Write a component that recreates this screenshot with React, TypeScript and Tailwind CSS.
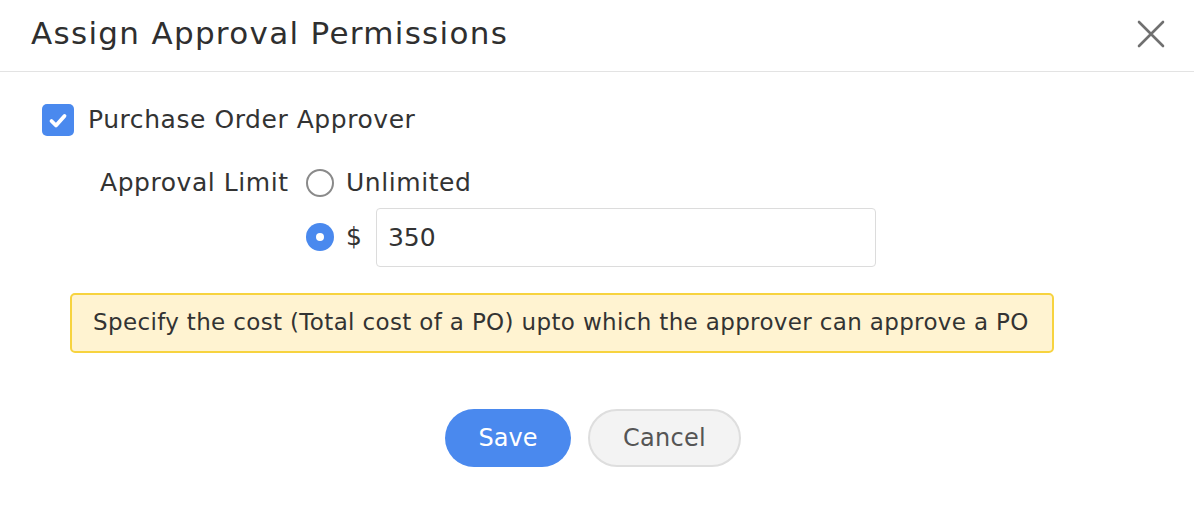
import React, { useState } from "react";

const App = () => {
  const [checked, setChecked] = useState(true);
  const [limit, setLimit] = useState("amount");
  const [amount, setAmount] = useState("350");

  return (
    <div
      className="w-[1194px] h-[512px] bg-white text-[#333333] overflow-hidden"
      style={{ fontFamily: "'DejaVu Sans', Inter, sans-serif" }}
    >
      <div className="h-[72px] flex items-center justify-between pl-[31px] pr-[28px] border-b border-[#e3e3e3]">
        <h1 className="text-[31px] font-normal tracking-[1.3px] text-[#2f2f2f] -mt-[4px]">
          Assign Approval Permissions
        </h1>
        <button className="w-[30px] h-[30px] flex items-center justify-center -mt-[4px]">
          <svg width="28" height="28" viewBox="0 0 28 28" fill="none">
            <path
              d="M2 2L26 26M26 2L2 26"
              stroke="#707070"
              strokeWidth="2.6"
              strokeLinecap="round"
            />
          </svg>
        </button>
      </div>

      <div className="pl-[42px] pt-[29px]">
        <label className="flex items-center gap-[14px] cursor-pointer">
          <span
            onClick={() => setChecked(!checked)}
            className="w-[32px] h-[32px] rounded-[5px] bg-[#4a89ee] flex items-center justify-center"
          >
            {checked && (
              <svg width="32" height="32" viewBox="0 0 32 32" fill="none">
                <path
                  d="M9.5 17L14 21.5L22.5 12"
                  stroke="white"
                  strokeWidth="3.8"
                  strokeLinecap="round"
                  strokeLinejoin="round"
                />
              </svg>
            )}
          </span>
          <span className="text-[25px] tracking-[0.55px]">Purchase Order Approver</span>
        </label>

        <div className="flex pl-[58px] mt-[25px]">
          <div className="text-[25px] tracking-[0.55px] leading-[38px] w-[206px]">Approval Limit</div>
          <div className="flex flex-col gap-[6px]">
            <label className="flex items-center h-[38px] cursor-pointer" onClick={() => setLimit("unlimited")}>
              <span
                className={
                  limit === "unlimited"
                    ? "w-[28px] h-[28px] rounded-full bg-[#4a89ee] flex items-center justify-center"
                    : "w-[28px] h-[28px] rounded-full border-2 border-[#8a8a8a] bg-white"
                }
              >
                {limit === "unlimited" && <span className="w-[8px] h-[8px] rounded-full bg-white" />}
              </span>
              <span className="text-[25px] tracking-[0.55px] ml-[12px]">Unlimited</span>
            </label>
            <div className="flex items-center">
              <label className="flex items-center cursor-pointer" onClick={() => setLimit("amount")}>
                <span
                  className={
                    limit === "amount"
                      ? "w-[28px] h-[28px] rounded-full bg-[#4a89ee] flex items-center justify-center"
                      : "w-[28px] h-[28px] rounded-full border-2 border-[#8a8a8a] bg-white"
                  }
                >
                  {limit === "amount" && <span className="w-[8px] h-[8px] rounded-full bg-white" />}
                </span>
                <span className="text-[25px] ml-[12px]">$</span>
              </label>
              <input
                value={amount}
                onChange={(e) => setAmount(e.target.value)}
                className="ml-[14px] w-[500px] h-[59px] border border-[#dcdcdc] rounded-[4px] px-[11px] text-[25px] text-[#333333] outline-none"
              />
            </div>
          </div>
        </div>

        <div className="ml-[28px] mt-[26px] w-[984px] h-[60px] bg-[#fff3d1] border-2 border-[#f7d33f] rounded-[5px] flex items-center pl-[21px]">
          <span className="text-[23px] tracking-[0.35px]">
            Specify the cost (Total cost of a PO) upto which the approver can approve a PO
          </span>
        </div>
      </div>

      <div className="flex justify-center gap-[17px] mt-[56px] pr-[8px]">
        <button className="w-[126px] h-[58px] rounded-full bg-[#4a89ee] text-white text-[24px]">
          Save
        </button>
        <button className="w-[153px] h-[58px] rounded-full bg-[#f3f3f3] border-2 border-[#dedede] text-[#555555] text-[24px] tracking-[0.3px]">
          Cancel
        </button>
      </div>
    </div>
  );
};

export default App;
